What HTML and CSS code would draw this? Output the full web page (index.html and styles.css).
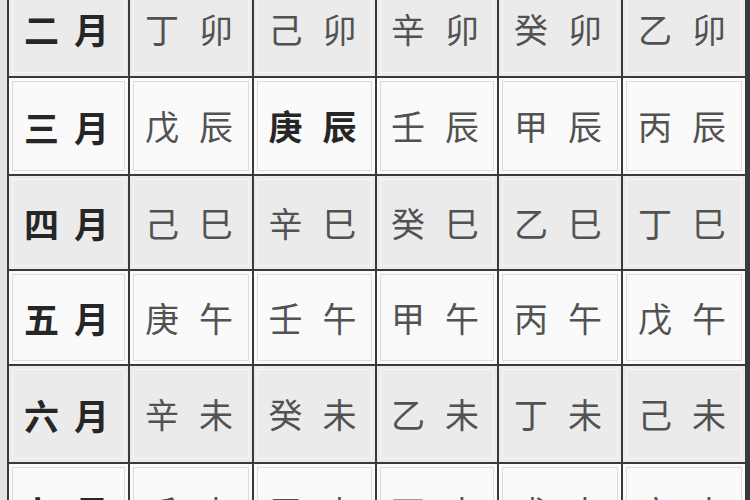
FILE: index.html
```html
<!DOCTYPE html>
<html lang="zh">
<head>
<meta charset="utf-8">
<title>月干支表</title>
<link rel="stylesheet" href="styles.css">
</head>
<body>
<div class="frame">
  <div class="table">
    <div class="cell month gray">二月</div>
    <div class="cell gray">丁卯</div>
    <div class="cell gray">己卯</div>
    <div class="cell gray">辛卯</div>
    <div class="cell gray">癸卯</div>
    <div class="cell gray">乙卯</div>

    <div class="cell month">三月</div>
    <div class="cell">戊辰</div>
    <div class="cell strong">庚辰</div>
    <div class="cell">壬辰</div>
    <div class="cell">甲辰</div>
    <div class="cell">丙辰</div>

    <div class="cell month gray">四月</div>
    <div class="cell gray">己巳</div>
    <div class="cell gray">辛巳</div>
    <div class="cell gray">癸巳</div>
    <div class="cell gray">乙巳</div>
    <div class="cell gray">丁巳</div>

    <div class="cell month">五月</div>
    <div class="cell">庚午</div>
    <div class="cell">壬午</div>
    <div class="cell">甲午</div>
    <div class="cell">丙午</div>
    <div class="cell">戊午</div>

    <div class="cell month gray">六月</div>
    <div class="cell gray">辛未</div>
    <div class="cell gray">癸未</div>
    <div class="cell gray">乙未</div>
    <div class="cell gray">丁未</div>
    <div class="cell gray">己未</div>

    <div class="cell month">七月</div>
    <div class="cell">壬申</div>
    <div class="cell">甲申</div>
    <div class="cell">丙申</div>
    <div class="cell">戊申</div>
    <div class="cell">庚申</div>
  </div>
</div>
</body>
</html>
```

FILE: styles.css
```css
html, body {
  margin: 0;
  padding: 0;
  width: 750px;
  height: 500px;
  overflow: hidden;
  background: #e4e4e4;
}

.frame {
  margin-left: 7px;
  margin-top: -21px;
  width: 743px;
  background: #3a3a3a;
}

.table {
  display: grid;
  grid-template-columns: 119px 122px 121px 120px 122px 122px;
  grid-template-rows: 95px 96px 93px 93px 96px 95px;
  gap: 2px;
  padding: 2px 0 2px 2px;
  background: #3a3a3a;
  font-family: "Noto Sans CJK SC", "Noto Sans CJK JP", sans-serif;
}

.cell {
  display: flex;
  align-items: center;
  justify-content: center;
  white-space: nowrap;
  background: #fafafa;
  box-shadow: inset 0 0 0 3px #fafafa, inset 0 0 0 4px #dcdcdc;
  font-size: 34px;
  line-height: 1;
  color: #525252;
  letter-spacing: 20px;
  padding-left: 16px;
}

.cell.gray {
  background: #ebebeb;
  box-shadow: inset 0 0 0 3px #ebebeb, inset 0 0 0 4px #f7f7f7;
}

.month {
  font-size: 35px;
  font-weight: 700;
  color: #262626;
  letter-spacing: 15px;
  padding-left: 11px;
}

.strong {
  font-weight: 700;
  color: #262626;
}
```
